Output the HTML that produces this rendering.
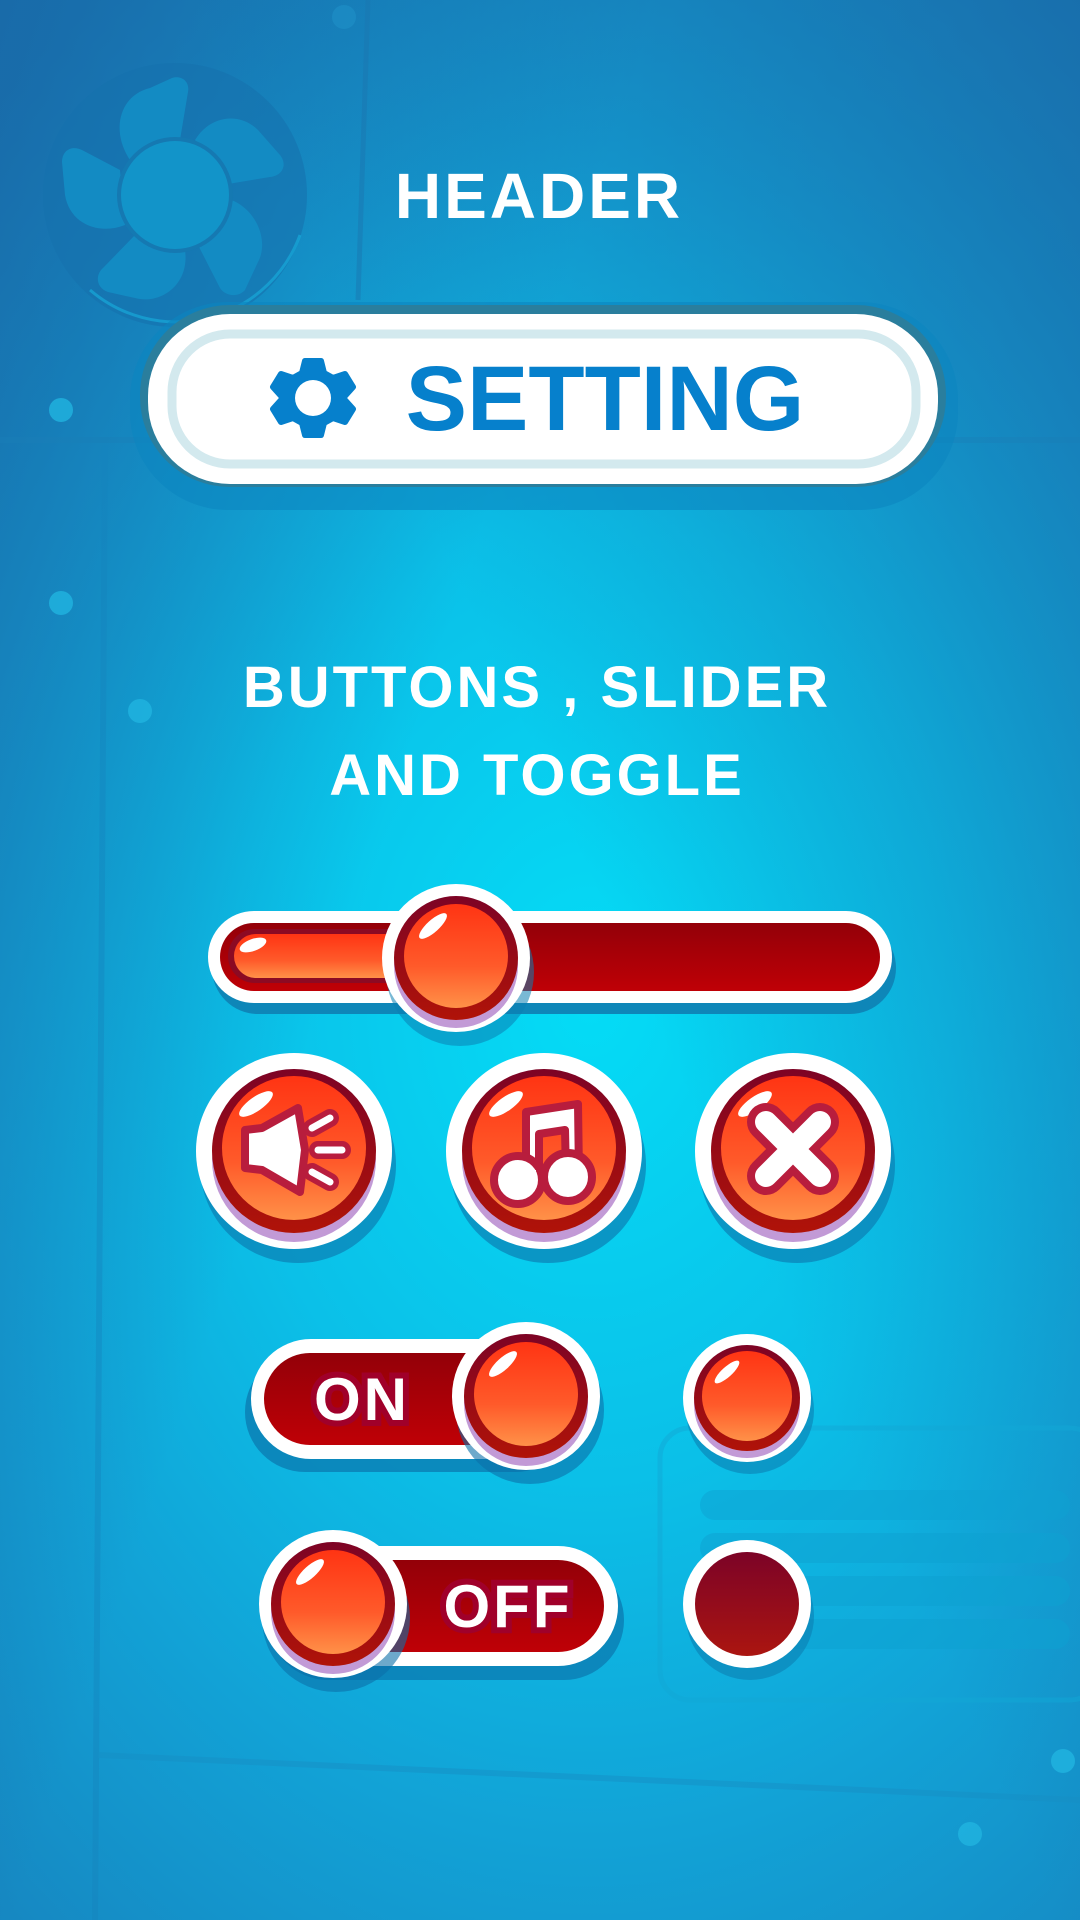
<!DOCTYPE html>
<html><head><meta charset="utf-8"><style>
html,body{margin:0;padding:0;width:1080px;height:1920px;overflow:hidden}
body{background:radial-gradient(ellipse 900px 1200px at 590px 1000px,#04dcf6 0%,#0bc0e8 40%,#12a2d6 70%,#1688c2 100%)}
svg{position:absolute;left:0;top:0}
</style></head><body>
<svg width="1080" height="1920" viewBox="0 0 1080 1920" xmlns="http://www.w3.org/2000/svg">
<defs>
<linearGradient id="or" x1="0" y1="0" x2="0" y2="1"><stop offset="0" stop-color="#ff3413"/><stop offset="0.6" stop-color="#ff5a2a"/><stop offset="1" stop-color="#ff9148"/></linearGradient>
<linearGradient id="rd" x1="0" y1="0" x2="0" y2="1"><stop offset="0" stop-color="#930008"/><stop offset="1" stop-color="#bf0006"/></linearGradient>
<linearGradient id="dk" x1="0" y1="0" x2="0" y2="1"><stop offset="0" stop-color="#7c0327"/><stop offset="1" stop-color="#ab1510"/></linearGradient>
<linearGradient id="ring" x1="0" y1="0" x2="0" y2="1"><stop offset="0" stop-color="#7d0325"/><stop offset="1" stop-color="#b01308"/></linearGradient>
<linearGradient id="tl" x1="0" y1="0" x2="1" y2="0.6"><stop offset="0" stop-color="#1a5e9e" stop-opacity="0.7"/><stop offset="0.45" stop-color="#1a5e9e" stop-opacity="0"/></linearGradient>
<linearGradient id="tr" x1="1" y1="0" x2="0.5" y2="0.4"><stop offset="0" stop-color="#1a5e9e" stop-opacity="0.6"/><stop offset="1" stop-color="#1a5e9e" stop-opacity="0"/></linearGradient>
</defs>
<rect width="1080" height="1920" fill="url(#tl)"/>
<rect width="1080" height="1920" fill="url(#tr)"/>
<!-- panel lines -->
<path d="M0 440 H1080" stroke="#1a7fb8" stroke-width="6" opacity="0.4"/>
<path d="M368 0 L358 300" stroke="#1a78b2" stroke-width="5" opacity="0.5"/>
<path d="M105 445 L95 1920" stroke="#1584be" stroke-width="6" opacity="0.4"/>
<path d="M98 1755 L1080 1800" stroke="#1690c6" stroke-width="6" opacity="0.5"/>
<rect x="660" y="1428" width="440" height="272" rx="30" fill="none" stroke="#12a8d6" stroke-width="5" opacity="0.5"/>
<g fill="#0ea2d2" opacity="0.5"><rect x="700" y="1490" width="370" height="30" rx="15"/><rect x="700" y="1533" width="370" height="30" rx="15"/><rect x="700" y="1576" width="370" height="30" rx="15"/><rect x="700" y="1619" width="370" height="30" rx="15"/></g>
<g fill="#20b4e0" opacity="0.8"><circle cx="344" cy="17" r="12" fill="#1d8cc4"/><circle cx="61" cy="410" r="12"/><circle cx="61" cy="603" r="12"/><circle cx="140" cy="711" r="12"/><circle cx="1063" cy="1761" r="12"/><circle cx="970" cy="1834" r="12"/></g>
<!-- fan -->
<circle cx="175" cy="195" r="132" fill="#1672ae" opacity="0.6"/>
<path d="M90 290 A132 132 0 0 0 300 235" fill="none" stroke="#17a8d8" stroke-width="3" opacity="0.7"/>
<g fill="#138bc3">
<path d="M130 160 C110 130 120 95 150 88 L172 78 C182 75 190 82 188 92 L180 140 Z"/>
<path d="M195 140 C210 115 240 112 258 130 L280 155 C288 165 282 176 270 177 L228 184 Z"/>
<path d="M225 198 C255 205 270 240 258 262 L245 290 C238 298 225 296 220 288 L198 245 Z"/>
<path d="M185 250 C190 285 160 305 135 298 L108 292 C96 288 95 275 103 268 L135 235 Z"/>
<path d="M125 225 C100 235 70 225 65 195 L62 162 C62 150 72 145 82 150 L120 170 Z"/>
</g>
<circle cx="175" cy="195" r="56" fill="#1294c9" stroke="#1579b2" stroke-width="4"/>
<!-- header -->
<text x="539" y="218" text-anchor="middle" font-family="Liberation Sans,sans-serif" font-weight="bold" font-size="64" fill="#fff" letter-spacing="3">HEADER</text>
<!-- setting banner -->
<rect x="130" y="302" width="828" height="208" rx="98" fill="#0b86c0" opacity="0.6"/>
<rect x="140" y="305" width="806" height="182" rx="90" fill="#2a7e9d"/>
<rect x="148" y="314" width="790" height="170" rx="82" fill="#fff"/>
<rect x="172" y="334" width="744" height="130" rx="58" fill="none" stroke="#d3e9ee" stroke-width="9"/>
<g transform="translate(313,398)" fill="#0680cc">
<path d="M-8-37 H8 L11-25 L20-20 L32-24 L40-11 L31-1 L31 1 L40 11 L32 24 L20 20 L11 25 L8 37 H-8 L-11 25 L-20 20 L-32 24 L-40 11 L-31 1 L-31-1 L-40-11 L-32-24 L-20-20 L-11-25 Z" stroke="#0680cc" stroke-width="6" stroke-linejoin="round"/>
<circle r="18" fill="#fff"/>
</g>
<text x="605" y="430" text-anchor="middle" font-family="Liberation Sans,sans-serif" font-weight="bold" font-size="92" fill="#0680cc" letter-spacing="0">SETTING</text>
<!-- subtitle -->
<g font-family="Liberation Sans,sans-serif" font-weight="bold" font-size="58" fill="#fff" text-anchor="middle" letter-spacing="3">
<text x="537" y="707">BUTTONS , SLIDER</text>
<text x="537" y="795">AND TOGGLE</text>
</g>
<!-- slider -->
<rect x="212" y="922" width="684" height="92" rx="46" fill="#0e86b8"/>
<rect x="208" y="911" width="684" height="92" rx="46" fill="#fff"/>
<rect x="220" y="923" width="660" height="68" rx="34" fill="url(#rd)"/>
<rect x="228" y="929" width="240" height="54" rx="27" fill="#8c0a23"/>
<rect x="234" y="934" width="230" height="44" rx="22" fill="url(#or)"/>
<ellipse cx="253" cy="945" rx="14" ry="6" fill="#fff" transform="rotate(-20 253 945)"/>
<g>
<circle cx="460" cy="972" r="74" fill="#0b7fb3" opacity="0.55"/>
<circle cx="456" cy="958" r="74" fill="#fff"/>
<circle cx="456" cy="966" r="62" fill="#c29ad6"/>
<circle cx="456" cy="958" r="62" fill="url(#ring)"/>
<circle cx="456" cy="956" r="52" fill="url(#or)"/>
<ellipse cx="433" cy="926" rx="18" ry="6" fill="#fff" transform="rotate(-42 433 926)"/>
</g>
<g>
<circle cx="298" cy="1165" r="98" fill="#0b7fb3" opacity="0.7"/>
<circle cx="294" cy="1151" r="98" fill="#fff"/>
<circle cx="294" cy="1160" r="82" fill="#c29ad6"/>
<circle cx="294" cy="1151" r="82" fill="url(#ring)"/>
<circle cx="294" cy="1148" r="72" fill="url(#or)"/>
<ellipse cx="256" cy="1104" rx="20" ry="7" fill="#fff" transform="rotate(-35 256 1104)"/>
<g stroke="#b81d3d" stroke-width="8" stroke-linejoin="round" fill="#fff">
<path d="M245 1130 L262 1128 L298 1108 L305 1150 L300 1192 L262 1170 L245 1168 Z"/>
<path d="M312 1128 L330 1118 M318 1150 L342 1150 M312 1172 L330 1182" stroke-width="18" stroke-linecap="round"/>
</g>
<path d="M312 1128 L330 1118 M318 1150 L342 1150 M312 1172 L330 1182" stroke="#fff" stroke-width="7" stroke-linecap="round"/>
</g>
<g>
<circle cx="548" cy="1165" r="98" fill="#0b7fb3" opacity="0.7"/>
<circle cx="544" cy="1151" r="98" fill="#fff"/>
<circle cx="544" cy="1160" r="82" fill="#c29ad6"/>
<circle cx="544" cy="1151" r="82" fill="url(#ring)"/>
<circle cx="544" cy="1148" r="72" fill="url(#or)"/>
<ellipse cx="506" cy="1104" rx="20" ry="7" fill="#fff" transform="rotate(-35 506 1104)"/>
<g stroke="#b81d3d" stroke-width="8" stroke-linejoin="round" fill="#fff">
<path d="M526 1112 L578 1104 L579 1175 L566 1175 L565 1130 L539 1134 L539 1180 L526 1180 Z"/>
<circle cx="518" cy="1180" r="24"/>
<circle cx="568" cy="1177" r="24"/>
</g>
<path d="M533 1170 L533 1185 M572 1165 L572 1180" stroke="#fff" stroke-width="6"/>
</g>
<g>
<circle cx="797" cy="1165" r="98" fill="#0b7fb3" opacity="0.7"/>
<circle cx="793" cy="1151" r="98" fill="#fff"/>
<circle cx="793" cy="1160" r="82" fill="#c29ad6"/>
<circle cx="793" cy="1151" r="82" fill="url(#ring)"/>
<circle cx="793" cy="1148" r="72" fill="url(#or)"/>
<ellipse cx="755" cy="1104" rx="20" ry="7" fill="#fff" transform="rotate(-35 755 1104)"/>
<path d="M766 1122 L820 1176 M820 1122 L766 1176" stroke="#b81d3d" stroke-width="38" stroke-linecap="round"/>
<path d="M766 1122 L820 1176 M820 1122 L766 1176" stroke="#fff" stroke-width="22" stroke-linecap="round"/>
</g>
<!-- ON toggle -->
<rect x="245" y="1352" width="330" height="120" rx="60" fill="#0b7db3" opacity="0.8"/>
<rect x="251" y="1339" width="330" height="120" rx="60" fill="#fff"/>
<rect x="264" y="1353" width="300" height="92" rx="46" fill="url(#rd)"/>
<text x="362" y="1420" text-anchor="middle" font-family="Liberation Sans,sans-serif" font-weight="bold" font-size="60" fill="#fff" stroke="#a0002a" stroke-width="12" paint-order="stroke" letter-spacing="3">ON</text>
<circle cx="530" cy="1410" r="74" fill="#0b6fa8" opacity="0.6"/>
<circle cx="526" cy="1396" r="74" fill="#fff"/>
<circle cx="526" cy="1404" r="62" fill="#c29ad6"/>
<circle cx="526" cy="1396" r="62" fill="url(#ring)"/>
<circle cx="526" cy="1394" r="52" fill="url(#or)"/>
<ellipse cx="503" cy="1364" rx="18" ry="6" fill="#fff" transform="rotate(-42 503 1364)"/>
<circle cx="750" cy="1410" r="64" fill="#0b7fb3" opacity="0.6"/>
<circle cx="747" cy="1398" r="64" fill="#fff"/>
<circle cx="747" cy="1405" r="53" fill="#c29ad6"/>
<circle cx="747" cy="1398" r="53" fill="url(#ring)"/>
<circle cx="747" cy="1396" r="45" fill="url(#or)"/>
<ellipse cx="727" cy="1372" rx="16" ry="5" fill="#fff" transform="rotate(-42 727 1372)"/>
<!-- OFF toggle -->
<rect x="268" y="1560" width="356" height="120" rx="60" fill="#0b7db3" opacity="0.8"/>
<rect x="262" y="1546" width="356" height="120" rx="60" fill="#fff"/>
<rect x="290" y="1560" width="314" height="92" rx="46" fill="url(#rd)"/>
<text x="508" y="1627" text-anchor="middle" font-family="Liberation Sans,sans-serif" font-weight="bold" font-size="60" fill="#fff" stroke="#a0002a" stroke-width="12" paint-order="stroke" letter-spacing="3">OFF</text>
<circle cx="336" cy="1618" r="74" fill="#0b6fa8" opacity="0.6"/>
<circle cx="333" cy="1604" r="74" fill="#fff"/>
<circle cx="333" cy="1612" r="62" fill="#c29ad6"/>
<circle cx="333" cy="1604" r="62" fill="url(#ring)"/>
<circle cx="333" cy="1602" r="52" fill="url(#or)"/>
<ellipse cx="310" cy="1572" rx="18" ry="6" fill="#fff" transform="rotate(-42 310 1572)"/>
<circle cx="750" cy="1616" r="64" fill="#0b7fb3" opacity="0.6"/>
<circle cx="747" cy="1604" r="64" fill="#fff"/>
<circle cx="747" cy="1604" r="52" fill="url(#dk)"/>
</svg>
</body></html>
